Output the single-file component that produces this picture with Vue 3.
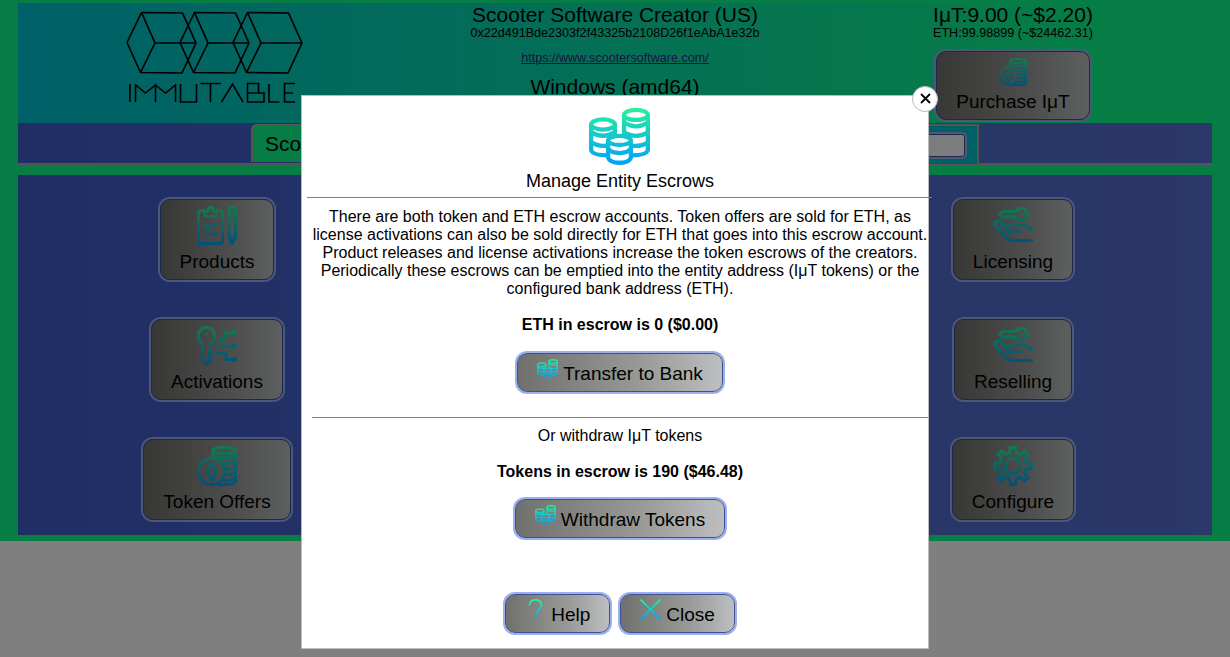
<script setup>
const leftActions = [
  { label: 'Products', icon: 'products' },
  { label: 'Activations', icon: 'activations' },
  { label: 'Token Offers', icon: 'token' },
]
const rightActions = [
  { label: 'Licensing', icon: 'license' },
  { label: 'Reselling', icon: 'license' },
  { label: 'Configure', icon: 'gear' },
]
</script>

<template>
  <svg class="defs" width="0" height="0" aria-hidden="true">
    <defs>
      <linearGradient id="aqua" gradientUnits="userSpaceOnUse" x1="0" y1="0" x2="0" y2="40">
        <stop offset="0" stop-color="#2af598" />
        <stop offset="1" stop-color="#009efd" />
      </linearGradient>
      <symbol id="icon-products" viewBox="0 0 40 40">
        <g fill="none" stroke="url(#aqua)" stroke-width="3" stroke-linejoin="round">
          <path d="M8 4.500H4.500Q1.500 4.500 1.500 7.500V34.500Q1.500 37.500 4.500 37.500H22.500Q25.500 37.500 25.500 34.500V7.500Q25.500 4.500 22.500 4.500H19" />
          <path d="M7.500 10.500V5.500H10.500Q10.500 1.500 13.500 1.500T16.500 5.500H19.500V10.500Z" />
          <path d="M6.500 21.500L10 19.500L13 22.500L17 17.500L20 19.500M6.500 28.200H20.500" />
          <path d="M32 31V5Q32 1.500 35.200 1.500T38.500 5V31L35.200 37.500Z M32 8H38.500M32 31H38.500" />
        </g>
      </symbol>
      <symbol id="icon-activations" viewBox="0 0 40 40">
        <g fill="none" stroke="url(#aqua)" stroke-width="3">
          <path d="M5.500 16.800A8.200 8.200 0 1 1 13.500 16.800V24L11.500 26L14.500 29L12 31.500L14 34L9.500 38L5.500 33.500Z" />
          <path d="M22 13.500H28V6.800H36M19 20.200H36M19 27H29V33.500H36" />
        </g>
        <g fill="url(#aqua)"><circle cx="9.500" cy="8" r="1.500" /><circle cx="37.200" cy="6.800" r="2.700" /><circle cx="37.200" cy="20.200" r="2.700" /><circle cx="37.200" cy="33.500" r="2.700" /></g>
      </symbol>
      <symbol id="icon-token" viewBox="0 0 40 40">
        <g fill="none" stroke="url(#aqua)" stroke-width="3">
          <circle cx="14.500" cy="25.500" r="13" />
          <path d="M14.500 17.500L19.300 26L14.500 34L9.700 26Z" />
          <ellipse cx="27" cy="4.500" rx="11.500" ry="3" />
          <path d="M15.500 4.500V12M38.500 4.500V35Q38.500 38.500 27 38.500H15M16 9.500C21 13 36 12 38.500 9M25 17.500Q34 17.500 38.500 15M28.500 23.500Q35 23 38.500 21M28.500 29Q35 29 38.500 27M25 34.500Q35 34.500 38.500 32" />
        </g>
      </symbol>
      <symbol id="icon-license" viewBox="0 0 40 40">
        <g fill="none" stroke="url(#aqua)" stroke-width="3.200" stroke-linejoin="round">
          <path d="M23.500 5.500A6 6 0 1 1 23.500 11.500H20L17.500 9.800L15 11.500L12.500 11.200H9.500L7 8.200L9.500 5.500Z" />
          <path d="M40 34.500H17L2.200 20C0.500 16 4.500 13.800 7 16L14 22.500M28.500 26H18Q14 25.500 14 22Q16 18.500 22 18.500C31 18.500 37 20.500 39.500 24.500" />
        </g>
        <circle cx="29.500" cy="8.500" r="1.500" fill="url(#aqua)" />
      </symbol>
      <symbol id="icon-gear" viewBox="0 0 40 40">
        <g fill="none" stroke="url(#aqua)" stroke-width="3.200">
          <circle cx="20" cy="20" r="7.800" />
          <path d="M17.500 1.500H22.500L23.300 7L27.200 8.600L31.800 5.200L34.800 8.200L31.400 12.800L33 16.700L38.500 17.500V22.500L33 23.300L31.400 27.200L34.800 31.800L31.800 34.800L27.200 31.400L23.300 33L22.500 38.500H17.500L16.700 33L12.800 31.400L8.200 34.800L5.200 31.800L8.600 27.200L7 23.300L1.500 22.500V17.500L7 16.700L8.600 12.800L5.200 8.200L8.200 5.200L12.800 8.600L16.700 7Z" />
        </g>
      </symbol>
      <symbol id="icon-coins" viewBox="0 0 40 40">
        <g fill="none" stroke="url(#aqua)" stroke-width="2.800">
          <ellipse cx="9.200" cy="12.800" rx="7.800" ry="3.300" />
          <ellipse cx="30.800" cy="6.500" rx="7.800" ry="3.300" />
          <ellipse cx="20" cy="23.200" rx="7.500" ry="3" />
          <path d="M1.400 12.800V29.500Q2 33 12.500 33M17 12.800V21M1.400 17.800Q9 22.500 17 17.800M1.400 24.200Q6 27.500 12.500 26.500M23 6.500V21M38.600 6.500V29.500Q38 33 27.500 33M23 11.500Q31 16.500 38.600 11.500M23 18Q31 22.500 38.600 18M27.500 26.700Q34 27.500 38.600 24.500M12.500 23.200V34.500C14 39 26 39 27.500 34.500V23.200M12.500 28.500C15 32.500 25 32.500 27.500 28.500" />
        </g>
      </symbol>
      <symbol id="icon-help" viewBox="0 0 40 40">
        <path d="M8.500 13C7.500 -2 32 -2 31.500 12C31 20 20.500 20 20.500 33" fill="none" stroke="url(#aqua)" stroke-width="3.400" />
        <circle cx="20.500" cy="38" r="2" fill="url(#aqua)" />
      </symbol>
      <symbol id="icon-close" viewBox="0 0 40 40">
        <path d="M1 1L39 39M39 1L1 39" fill="none" stroke="url(#aqua)" stroke-width="3.400" />
      </symbol>
    </defs>
  </svg>

  <div class="page">
    <header class="header">
      <div class="brand">
        <svg width="180" height="96" viewBox="0 0 180 96" fill="none" stroke="#000" stroke-width="1.700" stroke-linejoin="round">
          <g id="cube"><path d="M16.500 5.500L57.500 6L71 36L57 66L15.500 65.500L2 35.500ZL30 36L15.500 65.500M30 36H71" /></g>
          <use href="#cube" x="53" />
          <use href="#cube" x="106" />
        </svg>
        <svg class="wordmark" width="180" height="24" viewBox="0 0 180 24" fill="none" stroke="#000" stroke-width="1.600" role="img" aria-label="Immutable">
          <path d="M5 2V20M10.500 20V3L20.500 11L30.500 3V20M30.500 3L40.500 11L50.500 3V20M55.500 2V20H71.500V2M75.500 1.500H96M85.500 1.500V20M96.500 20L107.500 2L118 20M122.500 1.500H133.500V11H122.500ZM122.500 11H139V20H122.500ZM144 2V20H154.500M170 1.500H159.500V20H170M159.500 11H168" />
        </svg>
      </div>
      <div class="entity">
        <div class="large">Scooter Software Creator (US)</div>
        <div class="small">0x22d491Bde2303f2f43325b2108D26f1eAbA1e32b</div>
        <a class="small link">https://www.scootersoftware.com/</a>
        <div class="large">Windows (amd64)</div>
      </div>
      <div class="wallet">
        <div class="large">IμT:9.00 (~$2.20)</div>
        <div class="small">ETH:99.98899 (~$24462.31)</div>
        <button class="btn tile purchase">
          <svg width="28" height="28"><use href="#icon-token" /></svg>
          <span>Purchase IμT</span>
        </button>
      </div>
    </header>
    <nav class="nav">
      <div class="tab">Scooter Software</div>
      <div class="search"><input type="text" /></div>
    </nav>
    <main class="main">
      <div class="col">
        <button v-for="a in leftActions" :key="a.label" class="btn tile">
          <svg width="40" height="40"><use :href="'#icon-' + a.icon" /></svg>
          <span>{{ a.label }}</span>
        </button>
      </div>
      <div class="col">
        <button v-for="a in rightActions" :key="a.label" class="btn tile">
          <svg width="40" height="40"><use :href="'#icon-' + a.icon" /></svg>
          <span>{{ a.label }}</span>
        </button>
      </div>
    </main>
  </div>

  <div class="overlay">
    <section class="modal">
      <button class="dismiss" aria-label="Close">
        <svg width="11" height="11" viewBox="0 0 11 11"><path d="M1 1L10 10M10 1L1 10" stroke="#000" stroke-width="1.800" /></svg>
      </button>
      <div class="title">
        <svg width="61" height="61"><use href="#icon-coins" /></svg>
        <div class="heading">Manage Entity Escrows</div>
      </div>
      <hr class="rule top-rule" />
      <div class="body">
        <p class="intro">There are both token and ETH escrow accounts. Token offers are sold for ETH, as<br />license activations can also be sold directly for ETH that goes into this escrow account.<br />Product releases and license activations increase the token escrows of the creators.<br />Periodically these escrows can be emptied into the entity address (IμT tokens) or the<br />configured bank address (ETH).</p>
        <p class="amount">ETH in escrow is 0 ($0.00)</p>
        <button class="btn"><svg width="21" height="21"><use href="#icon-coins" /></svg><span>Transfer to Bank</span></button>
        <hr class="rule mid-rule" />
        <p class="or">Or withdraw IμT tokens</p>
        <p class="amount">Tokens in escrow is 190 ($46.48)</p>
        <button class="btn"><svg width="21" height="21"><use href="#icon-coins" /></svg><span>Withdraw Tokens</span></button>
        <div class="footer">
          <button class="btn"><svg width="21" height="21"><use href="#icon-help" /></svg><span>Help</span></button>
          <button class="btn"><svg width="21" height="21"><use href="#icon-close" /></svg><span>Close</span></button>
        </div>
      </div>
    </section>
  </div>
</template>

<style>
html,
body {
  margin: 0;
  height: 657px;
  overflow: hidden;
  background: #fff;
  font-family: "Liberation Sans", Arial, sans-serif;
}
</style>

<style scoped>
* { box-sizing: border-box; }
.defs { position: absolute; }
p { margin: 0; }
.page {
  height: 541px;
  padding: 3px 18px 6px;
  background: #0efa8c;
}
.header {
  display: grid;
  grid-template-columns: 398px 398px 398px;
  height: 120px;
  background: linear-gradient(90deg, #00c0d0, #0efa8c 90%);
}
.brand {
  display: flex;
  flex-direction: column;
  align-items: center;
  padding: 4px 4px 0 0;
}
.brand svg { flex: none; }
.wordmark { margin-top: -21px; }
.entity, .wallet { text-align: center; }
.large { font-size: 21px; line-height: 24px; }
.small { font-size: 12.6px; line-height: 14px; display: block; }
.wallet .small, .entity div.small { margin-top: -1px; }
.link {
  margin: 11px 0 9px;
  line-height: 15px;
  color: #40208c;
  text-decoration: underline;
}
.nav {
  display: flex;
  height: 42px;
  padding-left: 233px;
  border-bottom: 2px solid #aaa;
  background: linear-gradient(90deg, #3e5ecc, #5670d2);
}
.tab {
  width: 370px;
  height: 38px;
  margin-top: 1px;
  padding: 5px 12px;
  border: 2px solid #aaa;
  border-bottom: 0;
  border-radius: 6px 0 0 0;
  background: #0efa8c;
  font-size: 21px;
  line-height: 26px;
}
.search {
  display: flex;
  align-items: center;
  justify-content: flex-end;
  width: 358px;
  height: 41px;
  margin-top: 1px;
  padding-right: 12px;
  border: 2px solid #aaa;
  border-bottom-width: 1px;
  background: #00c0d0;
}
.search input {
  width: 230px;
  height: 23px;
  margin-top: 1px;
  border: 1px solid #3c5092;
  border-radius: 3px;
  box-shadow: 0 0 0 2px #9cafef;
  background: #f6f8fa;
}
.main {
  display: flex;
  justify-content: space-between;
  height: 360px;
  margin-top: 10px;
  padding: 24px 0 0;
  background: linear-gradient(90deg, #3e5ecc, #5670d2);
}
.col {
  display: flex;
  flex-direction: column;
  align-items: center;
  width: 398px;
  gap: 39px;
}
.btn {
  display: inline-flex;
  align-items: center;
  justify-content: center;
  height: 39px;
  padding: 0 19px;
  border: 1px solid #3c5092;
  border-radius: 10px;
  box-shadow: 0 0 0 2px #9cafef;
  background: linear-gradient(90deg, #70706c, #989a98 60%, #bcbec0);
  color: #000;
  font: 19px "Liberation Sans", Arial, sans-serif;
}
.btn svg { flex: none; margin: -8px 5px 0 0; }
.btn span { margin-top: 3px; line-height: 22px; }
.tile {
  flex-direction: column;
  justify-content: flex-start;
  height: 81px;
  padding: 6px 19px 0;
}
.tile svg { margin: 0; }
.tile span { margin-top: 5px; }
.tile.purchase {
  height: 69px;
  margin-top: 11px;
}
.purchase svg { margin-top: 0; }
.overlay {
  position: fixed;
  inset: 0;
  background: rgba(0, 0, 0, 0.5);
}
.modal {
  position: absolute;
  left: 301px;
  top: 95px;
  width: 628px;
  height: 554px;
  border: 1px solid #bbb;
  background: #fff;
}
.dismiss {
  position: absolute;
  top: -10px;
  right: -10px;
  display: flex;
  align-items: center;
  justify-content: center;
  width: 26px;
  height: 26px;
  padding: 0 0 2px;
  border: 1px solid #bbb;
  border-radius: 50%;
  background: #fff;
}
.title {
  display: flex;
  flex-direction: column;
  align-items: center;
  height: 101px;
  padding: 9px 0 0 9px;
}
.heading { margin-top: 5px; padding-left: 1px; font-size: 18px; line-height: 20px; }
.rule { margin: 0; border: 0; border-top: 1px solid #808080; }
.top-rule { width: 625px; margin-left: 5px; }
.body {
  width: 616px;
  margin-left: 10px;
  padding-top: 10px;
  text-align: center;
  font-size: 16px;
  line-height: 18px;
}
.intro { white-space: nowrap; }
.amount { margin: 18px 0; font-weight: bold; }
.mid-rule { margin: 25px 0 9px; }
.body > .btn { margin-top: 1px; vertical-align: top; }
.mid-rule ~ .btn { margin-top: 0; }
.footer {
  display: flex;
  justify-content: center;
  gap: 10px;
  margin-top: 56px;
}
</style>
